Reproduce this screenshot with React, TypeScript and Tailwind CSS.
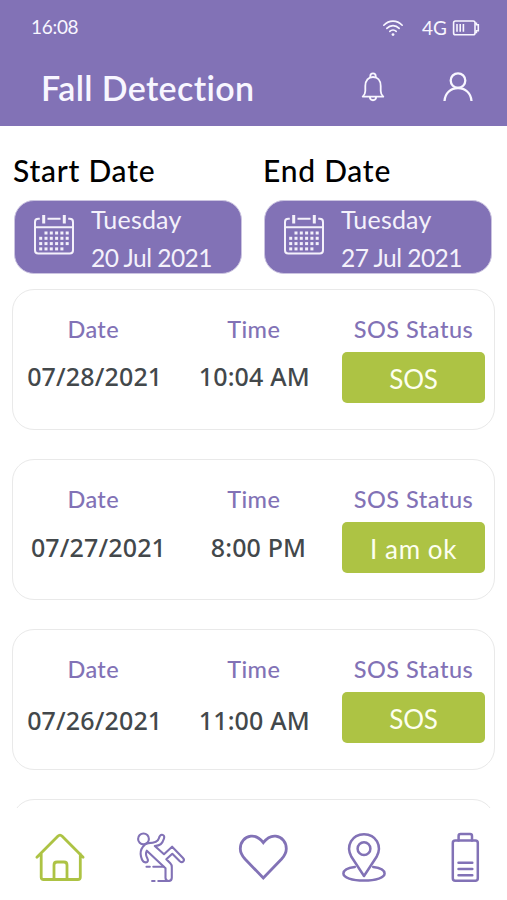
import type { ReactNode } from 'react';
import clsx from 'clsx';

interface FallEvent {
  date: string;
  time: string;
  status: string;
  rowCls: string;
  timeCls: string;
  statusCls: string;
}

const EVENTS: FallEvent[] = [
  { date: '07/28/2021', time: '10:04 AM', status: 'SOS',     rowCls: 'pt-[12px] pl-[2px]', timeCls: '',         statusCls: 'tracking-[-0.2px]' },
  { date: '07/27/2021', time: '8:00 PM',  status: 'I am ok', rowCls: 'pt-[13px] pl-[7px]', timeCls: 'pl-[6px]', statusCls: 'tracking-[0.6px]' },
  { date: '07/26/2021', time: '11:00 AM', status: 'SOS',     rowCls: 'pt-[16px] pl-[2px]', timeCls: '',         statusCls: 'tracking-[-0.2px]' },
];

const DOT_ROWS = [
  { y: 19, xs: [12, 17.3, 22.6, 27.9, 33.2] },
  { y: 24.3, xs: [6.7, 12, 17.3, 22.6, 27.9, 33.2] },
  { y: 29.6, xs: [6.7, 12, 17.3, 22.6, 27.9, 33.2] },
  { y: 34.9, xs: [6.7, 12, 17.3, 22.6, 27.9] },
];

function WifiIcon() {
  return (
    <svg width="22" height="18" viewBox="0 0 22 18" fill="none" stroke="currentColor" strokeWidth="1.6" strokeLinecap="round">
      <path d="M1.8 6.2C7 .7 15 .7 20.2 6.2M4.8 9.4c3.5-3.7 8.9-3.7 12.4 0M7.8 12.4c1.8-1.9 4.6-1.9 6.4 0" />
      <circle cx="11" cy="15.6" r="1.4" fill="currentColor" stroke="none" />
    </svg>
  );
}

function SmallBattery() {
  return (
    <svg width="28" height="18" viewBox="0 0 28 18" fill="none" stroke="currentColor" strokeWidth="1.6">
      <rect x="1.6" y="2" width="21.4" height="13.8" rx="1.8" />
      <path d="M23 4.4h1.4v1.4h1.9v6h-1.9v1.6H23M5 5v7.8M8.2 5v7.8M11.4 5v7.8" />
    </svg>
  );
}

function BellIcon() {
  return (
    <svg width="24" height="30" viewBox="0 0 24 30" fill="none" stroke="currentColor" strokeWidth="1.8" strokeLinecap="round" strokeLinejoin="round">
      <path d="M9.3 5.2V4a2.7 2.7 0 0 1 5.4 0v1.2" />
      <path d="M1.7 24.6C3.5 23 4.3 21.5 4.3 19v-5C4.3 8.4 7.5 5 12 5s7.7 3.4 7.7 9v5c0 2.5.8 4 2.6 5.6ZM8.8 24.8c.2 4.6 6.2 4.6 6.4 0" />
    </svg>
  );
}

function UserIcon() {
  return (
    <svg width="30" height="30" viewBox="0 0 30 30" fill="none" stroke="currentColor" strokeWidth="2.3">
      <circle cx="15" cy="8.6" r="7.3" />
      <path d="M1.5 29C2 21 8 16 15 16s13 5 13.5 13" />
    </svg>
  );
}

function CalendarIcon() {
  return (
    <svg width="40" height="42" viewBox="0 0 40 42" fill="none" stroke="currentColor" strokeWidth="2">
      <path d="M5.8 4.8H4.3C2.4 4.8 1 6 1 8v28.2C1 38.3 2.2 39.5 4.3 39.5h31.4c2.1 0 3.3-1.2 3.3-3.3V8c0-2-1.4-3.2-3.3-3.2h-1.5M13.5 4.8h13M1 13.2h38" />
      <path d="M9.7 1v8.4M30.3 1v8.4" strokeWidth="3" />
      {DOT_ROWS.map((row) =>
        row.xs.map((x) => (
          <rect key={`${row.y}-${x}`} x={x - 1.5} y={row.y - 1.5} width="3" height="3" fill="currentColor" stroke="none" />
        )),
      )}
    </svg>
  );
}

function NavIcon({ active, children }: { active?: boolean; children: ReactNode }) {
  return (
    <button className={active ? 'text-[#adc344]' : 'text-[#8272b6]'}>
      <svg width="52" height="52" viewBox="0 0 52 52" fill="none" stroke="currentColor" strokeWidth="2.8" strokeLinecap="round" strokeLinejoin="round">
        {children}
      </svg>
    </button>
  );
}

function DateField({ label, day, date }: { label: string; day: string; date: string }) {
  return (
    <div className="w-[228px]">
      <h2 className="h-[50px] -ml-px pt-[2px] text-[30px] leading-9 font-medium tracking-[0.75px] text-black whitespace-nowrap">{label}</h2>
      <button className="flex w-full h-[74px] rounded-[20px] border border-[#cbc4e0] bg-[#8272b6] pl-[19px] pt-[13px] text-left text-[#f4f1fb]">
        <CalendarIcon />
        <span className="-mt-[14px] ml-[17px] flex flex-col text-[25px] leading-[38px] whitespace-nowrap">
          <span className="tracking-[0.2px]">{day}</span>
          <span className="pt-px text-[24.5px] tracking-[-0.5px]">{date}</span>
        </span>
      </button>
    </div>
  );
}

function EventCard({ event }: { event: FallEvent }) {
  return (
    <article className="flex h-[141px] shrink-0 rounded-[22px] border-[1.5px] border-[#e9e9e9] bg-white pt-[22px]">
      <div className="w-[321px]">
        <div className="grid grid-cols-2 text-center text-[23.5px] leading-[34px] font-medium tracking-[0.4px] text-[#8272b6]">
          <span>Date</span>
          <span>Time</span>
        </div>
        <div className={clsx('grid grid-cols-2 text-center font-["Noto_Sans"] text-[25px] leading-9 font-medium tracking-[0.15px] text-[#43484b] whitespace-nowrap', event.rowCls)}>
          <span>{event.date}</span>
          <span className={event.timeCls}>{event.time}</span>
        </div>
      </div>
      <div className="ml-[8px] w-[143px] text-center">
        <div className="text-[23.5px] leading-[34px] font-medium tracking-[0.5px] text-[#8272b6] whitespace-nowrap">SOS Status</div>
        <button className={clsx('mt-[6px] h-[51px] w-full rounded-[5px] bg-[#adc344] pt-[2px] text-[26px] leading-[51px] text-[#fdfff0]', event.statusCls)}>
          {event.status}
        </button>
      </div>
    </article>
  );
}

export default function App() {
  return (
    <div className="flex h-[900px] w-[507px] flex-col overflow-hidden bg-white font-[Lato,sans-serif]">
      <header className="h-[126px] shrink-0 bg-[#8272b6] text-[#f8f6ff]">
        <div className="flex h-[54px] items-center pl-[31px] pr-[27px]">
          <span className="text-[19px] tracking-[-0.3px]">16:08</span>
          <span className="ml-auto mt-px"><WifiIcon /></span>
          <span className="ml-[18px] mr-[5px] mt-[2px] text-[19px]">4G</span>
          <span className="mt-px"><SmallBattery /></span>
        </div>
        <div className="flex h-[68px] items-center pl-[41px] pr-[34px]">
          <h1 className="-mt-[2px] text-[34px] font-semibold tracking-[0.35px] whitespace-nowrap [font-variant-ligatures:none]">Fall Detection</h1>
          <button className="ml-auto -mt-[3px]"><BellIcon /></button>
          <button className="ml-[58px] -mt-[2px]"><UserIcon /></button>
        </div>
      </header>

      <main className="flex min-h-0 flex-1 flex-col overflow-hidden">
        <section className="flex h-[163px] shrink-0 gap-[22px] pl-[14px] pt-[24px]">
          <DateField label="Start Date" day="Tuesday" date="20 Jul 2021" />
          <DateField label="End Date" day="Tuesday" date="27 Jul 2021" />
        </section>
        <section className="flex flex-col gap-[29px] px-[12px]">
          {EVENTS.map((event) => <EventCard key={event.date} event={event} />)}
          <article className="h-[141px] shrink-0 rounded-[22px] border-[1.5px] border-[#e9e9e9]" />
        </section>
      </main>

      <nav className="flex h-[92px] shrink-0 items-start justify-between bg-white pl-[34px] pr-[16px] pt-[24px]">
        <NavIcon active>
          <path d="M2.9 25.2 23.8 4.3q2.2-2.2 4.4 0l20.9 20.9M7.2 22v23.2q0 2.3 2.5 2.3h34.1q2.5 0 2.5-2.3V22" />
          <path d="M20 47V33q0-3 3-3h7q3 0 3 3v14" />
        </NavIcon>
        <NavIcon>
          <g strokeWidth="2.1" transform="translate(.8 0)">
            <circle cx="7.7" cy="6.9" r="5.4" />
            <path d="M12.7 11.1c6 0 9.4-1 10.3-4.5.8-3 1.6-4 3.3-3.8 2.2.3 2.5 2 1.8 4C26.5 11.9 24.5 13.6 19 14l9.2 8.2 8.1-7.5L47.2 26c2.4 2.7-.6 5.4-3.2 3.2l-7.5-7.4-6 5.5 4 4q1.5 1.5 1.5 3.7v10.8c0 2.2-1.1 3.2-3.2 3.2s-3.1-1-3.1-3.2V36.3L11 18.7c-1.2 2.2-1.4 4 .4 7.4 1.5 2.7.4 4.5-1.6 4.3C5.5 30 2.8 20.3 7 14.8c1.2-1.7 2.8-3.7 5.7-3.7Z" />
            <path d="M10.7 34.7H14M17.5 34.7h10.5M16.3 49h2.5M22.5 49H33" />
          </g>
        </NavIcon>
        <NavIcon>
          <path strokeLinejoin="miter" d="M26.3 10.7C21.8 4.8 17.6 3.7 13.8 4.2 7.4 5 3.3 10.3 3.3 16.7c0 4 1.8 7.1 4.7 10.3l18.3 19 18.3-19c2.9-3.2 4.7-6.3 4.7-10.3 0-6.4-4.1-11.7-10.5-12.5-3.8-.5-8 .6-12.5 6.5Z" />
        </NavIcon>
        <NavIcon>
          <g strokeWidth="2.5">
            <path d="M26 44 13.4 24.8C7.4 14 14.1 2.2 26 2.2s18.6 11.8 12.6 22.6Z" />
            <circle cx="26" cy="16.7" r="6.4" />
            <path d="M16.8 35C9.3 36 5.4 38.3 5.4 41.5c0 4.1 8.6 7.1 20.6 7.1s20.6-3 20.6-7.1c0-3.2-3.9-5.5-11.4-6.5" />
          </g>
        </NavIcon>
        <NavIcon>
          <g strokeWidth="2.5">
            <rect x="13.8" y="8.4" width="25" height="40.4" rx="2.5" />
            <path d="M19.6 8.4V3.9Q19.6 2 21.5 2h9.6q1.9 0 1.9 1.9v4.5M19.5 30.7h13.8M19.5 37h13.8M19.5 43.3h13.8" />
          </g>
        </NavIcon>
      </nav>
    </div>
  );
}
